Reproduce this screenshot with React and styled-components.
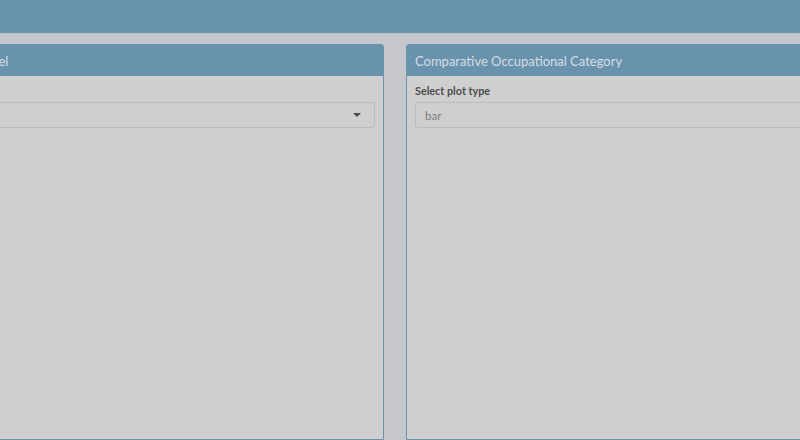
import React from "react";
import styled, { createGlobalStyle } from "styled-components";

const Global = createGlobalStyle`
  html, body { margin: 0; padding: 0; }
  body {
    background: #c5c7ca;
    font-family: Lato, "Liberation Sans", sans-serif;
    overflow: hidden;
    width: 800px;
    height: 440px;
  }
  * { box-sizing: border-box; }
`;

const Page = styled.div`
  width: 800px;
  height: 440px;
  overflow: hidden;
  display: flex;
  flex-direction: column;
`;

const TopBar = styled.header`
  height: 34px;
  flex: none;
  background: #6993ad;
  border-bottom: 1px solid #b9c3cb;
`;

const Row = styled.div`
  display: flex;
  gap: 22px;
  margin-top: 10px;
  margin-left: ${(p) => p.$offset}px;
  flex: 1;
  min-height: 0;
`;

const Box = styled.section`
  flex: none;
  width: ${(p) => p.$width}px;
  background: #cfcfcf;
  border: 1px solid #6993ad;
  border-radius: 3px 3px 0 0;
  display: flex;
  flex-direction: column;
`;

const BoxHeader = styled.div`
  height: 31px;
  background: #6993ad;
  display: flex;
  align-items: center;
  padding: 0 8px;
  color: #d6dde3;
  font-size: 13px;
  white-space: nowrap;
`;

const BoxBody = styled.div`
  padding: 8px 8px 0 8px;
  display: flex;
  flex-direction: column;
`;

const Label = styled.div`
  font-size: 10.8px;
  font-weight: 700;
  color: #4c4c4c;
  height: 13px;
  line-height: 13px;
  margin-bottom: 5px;
  visibility: ${(p) => (p.$hidden ? "hidden" : "visible")};
`;

const SelectBox = styled.div`
  height: 26px;
  border: 1px solid #bcbcbc;
  border-radius: 3px;
  display: flex;
  align-items: center;
  justify-content: space-between;
  padding: 0 13px 0 9px;
  font-size: 11.5px;
  color: #808080;
`;

const Caret = styled.span`
  width: 0;
  height: 0;
  border-left: 4px solid transparent;
  border-right: 4px solid transparent;
  border-top: 4px solid #4a4a4a;
`;

export default function App() {
  return (
    <>
      <Global />
      <Page>
        <TopBar />
        <Row $offset={-109}>
          <Box $width={493}>
            <BoxHeader>Occupational Level</BoxHeader>
            <BoxBody>
              <Label $hidden>Select level</Label>
              <SelectBox>
                <span />
                <Caret />
              </SelectBox>
            </BoxBody>
          </Box>
          <Box $width={420}>
            <BoxHeader>Comparative Occupational Category</BoxHeader>
            <BoxBody>
              <Label>Select plot type</Label>
              <SelectBox>
                <span>bar</span>
              </SelectBox>
            </BoxBody>
          </Box>
        </Row>
      </Page>
    </>
  );
}
